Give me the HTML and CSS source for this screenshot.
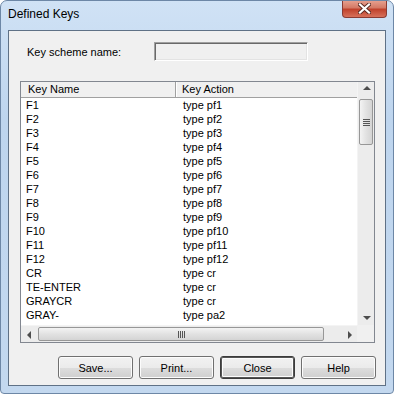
FILE: index.html
```html
<!DOCTYPE html>
<html lang="en">
<head>
  <meta charset="UTF-8">
  <title>Defined Keys</title>
  <link rel="stylesheet" href="styles.css">
</head>
<body>
  <div class="window">
    <div class="titlebar">
      <span class="title">Defined Keys</span>
      <div class="close-btn">
        <svg width="13" height="11" viewBox="0 0 13 11">
          <path d="M2 1.5 L11 9.5 M11 1.5 L2 9.5" stroke="#5a2a22" stroke-width="4" stroke-linecap="square"/>
          <path d="M2 1.5 L11 9.5 M11 1.5 L2 9.5" stroke="#fff" stroke-width="2.2" stroke-linecap="square"/>
        </svg>
      </div>
    </div>
    <div class="client">
      <div class="scheme-row">
        <label class="scheme-label">Key scheme name:</label>
        <div class="textbox"></div>
      </div>

      <div class="listview">
        <div class="view">
          <div class="header">
            <div class="hcol1">Key Name</div>
            <div class="hcol2">Key Action</div>
          </div>
          <div class="rows" id="rows"></div>
        </div>
        <div class="vscroll">
          <div class="arrow up"></div>
          <div class="vthumb"><div class="grip-v"></div></div>
          <div class="vspace"></div>
          <div class="arrow down"></div>
        </div>
        <div class="hscroll">
          <div class="arrow left"></div>
          <div class="hthumb"><div class="grip-h"></div></div>
          <div class="hspace"></div>
          <div class="arrow right"></div>
        </div>
        <div class="corner"></div>
      </div>

      <div class="buttons">
        <button>Save...</button>
        <button>Print...</button>
        <button class="default">Close</button>
        <button>Help</button>
      </div>
    </div>
  </div>

  <script>
    var keys = [
      ["F1", "type pf1"], ["F2", "type pf2"], ["F3", "type pf3"], ["F4", "type pf4"],
      ["F5", "type pf5"], ["F6", "type pf6"], ["F7", "type pf7"], ["F8", "type pf8"],
      ["F9", "type pf9"], ["F10", "type pf10"], ["F11", "type pf11"], ["F12", "type pf12"],
      ["CR", "type cr"], ["TE-ENTER", "type cr"], ["GRAYCR", "type cr"], ["GRAY-", "type pa2"],
      ["GRAY*", "type pa1"]
    ];
    var html = "";
    keys.forEach(function (k) {
      html += '<div class="row"><div class="c1">' + k[0] + '</div><div class="c2">' + k[1] + '</div></div>';
    });
    document.getElementById("rows").innerHTML = html;
  </script>
</body>
</html>
```

FILE: styles.css
```css
body { margin: 0; font-family: "Liberation Sans", Arial, sans-serif; font-size: 11px; color: #000; background: #fff; }

.window { width: 394px; height: 394px; box-sizing: border-box; border: 1px solid #6d87a6; border-radius: 7px 7px 4px 4px; background: linear-gradient(180deg, #d0e2f5 0%, #bed5ee 30%, #c3d8ef 100%); display: flex; flex-direction: column; overflow: hidden; }
.titlebar { height: 29px; display: flex; justify-content: space-between; align-items: flex-start; padding: 0 6px 0 7px; }
.title { font-size: 12px; line-height: 27px; color: #000; }
.close-btn { width: 45px; height: 18px; margin-top: -1px; border: 1px solid #8a3b33; border-top: none; border-radius: 0 0 4px 4px; background: linear-gradient(180deg, #e8a493 0%, #d47a66 45%, #c0422c 55%, #d7715b 100%); display: flex; align-items: center; justify-content: center; box-sizing: border-box; }

.client { margin: 0 7px 7px 7px; height: 356px; box-sizing: border-box; border: 1px solid #5f7186; background: #f0f0f0; }

.scheme-row { display: flex; align-items: center; padding: 11px 0 0 18px; }
.scheme-label { width: 127px; }
.textbox { width: 154px; height: 19px; box-sizing: border-box; border-top: 1px solid #a0a0a0; border-left: 1px solid #a0a0a0; border-right: 1px solid #fff; border-bottom: 1px solid #fff; box-shadow: inset 1px 1px 0 #696969, inset -1px -1px 0 #e3e3e3; background: #f0f0f0; }

.listview { margin: 20px 0 0 11px; width: 355px; height: 262px; box-sizing: border-box; border: 1px solid #828790; display: grid; grid-template-columns: 1fr 17px; grid-template-rows: 1fr 17px; background: #fff; }
.view { overflow: hidden; }
.header { display: flex; height: 16px; box-sizing: border-box; background: #f0f0f0; border-bottom: 1px solid #a0a0a0; line-height: 15px; }
.hcol1 { width: 155px; box-sizing: border-box; padding-left: 7px; border-right: 1px solid #a0a0a0; box-shadow: 1px 0 0 #fff; }
.hcol2 { padding-left: 6px; flex: 1; }
.row { display: flex; height: 14px; line-height: 14px; }
.c1 { width: 155px; box-sizing: border-box; padding-left: 5px; }
.c2 { padding-left: 7px; }

.vscroll, .hscroll { background: #ececec; display: flex; }
.vscroll { flex-direction: column; border-left: 1px solid #f4f4f4; }
.hscroll { border-top: 1px solid #f4f4f4; }
.corner { background: #f0f0f0; }
.arrow { width: 17px; height: 17px; flex: none; position: relative; }
.arrow::after { content: ""; position: absolute; left: 50%; top: 50%; width: 0; height: 0; border: 3px solid transparent; }
.arrow.up::after { margin: -5px 0 0 -4px; border-width: 0 4px 4px; border-bottom-color: #4d4d4d; }
.arrow.down::after { margin: -1px 0 0 -4px; border-width: 4px 4px 0; border-top-color: #4d4d4d; }
.arrow.left::after { margin: -4px 0 0 -3px; border-width: 4px 4px 4px 0; border-right-color: #4d4d4d; }
.arrow.right::after { margin: -4px 0 0 -1px; border-width: 4px 0 4px 4px; border-left-color: #4d4d4d; }
.vspace, .hspace { flex: 1; }
.vthumb { margin: 0 1px; height: 46px; box-sizing: border-box; border: 1px solid #979797; border-radius: 2px; background: linear-gradient(90deg, #f3f3f3, #e2e2e2 50%, #d4d4d4); display: flex; align-items: center; justify-content: center; }
.grip-v { width: 7px; height: 7px; background: repeating-linear-gradient(180deg, #555 0 1px, transparent 1px 2px); }
.hthumb { width: 286px; margin: 1px 0; box-sizing: border-box; border: 1px solid #979797; border-radius: 2px; background: linear-gradient(180deg, #f3f3f3, #e2e2e2 50%, #d4d4d4); display: flex; align-items: center; justify-content: center; }
.grip-h { width: 7px; height: 7px; background: repeating-linear-gradient(90deg, #555 0 1px, transparent 1px 2px); }

.buttons { display: flex; gap: 6px; padding: 13px 0 0 49px; }
button { width: 75px; height: 23px; box-sizing: border-box; font-family: "Liberation Sans", Arial, sans-serif; font-size: 11px; color: #000; border: 1px solid #707070; border-radius: 3px; background: linear-gradient(180deg, #f2f2f2 0%, #ebebeb 50%, #dddddd 51%, #cfcfcf 100%); box-shadow: inset 0 0 0 1px #fcfcfc; padding: 0; }
button.default { border-color: #3c3c3c; box-shadow: inset 0 0 0 1px #555, inset 0 0 0 2px #fcfcfc; }
```
